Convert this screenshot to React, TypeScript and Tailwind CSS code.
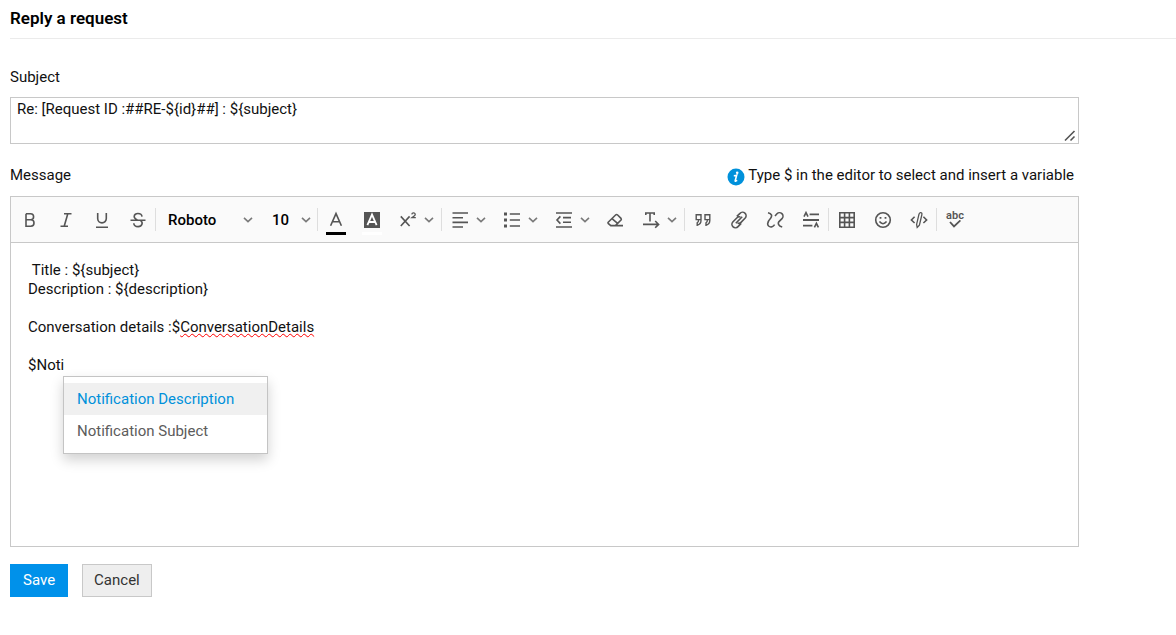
import React, { useState } from "react";

const stroke = {
  fill: "none",
  stroke: "currentColor",
  strokeWidth: 1.6,
} as const;

function Icon({ children }: { children: React.ReactNode }) {
  return (
    <svg viewBox="0 0 18 18" className="w-[18px] h-[18px] shrink-0" aria-hidden="true" {...stroke}>
      {children}
    </svg>
  );
}

function Chevron() {
  return (
    <svg viewBox="0 0 10 6" className="w-2.5 h-1.5 shrink-0 text-[#7a7a7a]" aria-hidden="true" {...stroke}>
      <path d="M1 0.8 L5 4.6 L9 0.8" />
    </svg>
  );
}

const icons = {
  bold: (
    <Icon>
      <path d="M5 2.8 H9.6 A3 3 0 0 1 9.6 8.8 H5 M9.8 8.8 A3.2 3.2 0 0 1 9.8 15.2 H5 V2.8" />
    </Icon>
  ),
  italic: (
    <Icon>
      <path d="M7 2.8 H14.5 M3.5 15.2 H11 M10.8 2.8 L7.2 15.2" />
    </Icon>
  ),
  underline: (
    <Icon>
      <path d="M4.7 2 V7.6 A4.3 4.3 0 0 0 13.3 7.6 V2 M3 16.2 H15" />
    </Icon>
  ),
  strike: (
    <Icon>
      <path d="M13 5.6 C12.6 1.6 5.2 1.4 5.2 5.6 C5.2 7.4 6.5 8.2 8.4 8.9 M1.5 9.3 H16.5 M11.6 9.6 C14.4 11.4 13.2 15.6 9.2 15.6 C6.4 15.6 4.9 14.2 4.8 12.2" />
    </Icon>
  ),
  color: (
    <Icon>
      <path d="M3.6 14.8 L9 2.6 L14.4 14.8 M5.4 10.8 H12.6" />
    </Icon>
  ),
  highlight: (
    <Icon>
      <rect x="1" y="1" width="16" height="16" fill="currentColor" stroke="none" />
      <path d="M4.4 14.2 L9 3.6 L13.6 14.2 M6 11 H12" stroke="#fff" strokeWidth="1.8" />
    </Icon>
  ),
  script: (
    <Icon>
      <path d="M1.8 5.4 L10.6 15 M10.6 5.4 L1.8 15" />
      <path d="M12.8 3.4 C13 1.4 16.4 1.4 16.2 3.6 C16.1 4.6 14.2 5.6 13 6.6 H16.8" strokeWidth="1.3" />
    </Icon>
  ),
  align: (
    <Icon>
      <path d="M1.5 2 H17 M1.5 6.7 H12 M1.5 11.4 H17 M1.5 16 H12" />
    </Icon>
  ),
  list: (
    <Icon>
      <path d="M6.8 3 H17 M6.8 9 H17 M6.8 15 H17" />
      <path d="M1 3 H4 M1 9 H4 M1 15 H4" strokeWidth="3" />
    </Icon>
  ),
  indent: (
    <Icon>
      <path d="M1 2 H17 M8 6.6 H16 M8 11.2 H16 M1 16 H17 M5.4 5.4 L2 9 L5.4 12.6" />
    </Icon>
  ),
  eraser: (
    <Icon>
      <path d="M1.2 11.2 L8.8 3.8 Q9.6 3.2 10.4 3.8 L14 7.4 Q14.6 8.2 14 9 L8.4 14.6 H3.8 L1.2 12.4 Q0.8 11.8 1.2 11.2 Z M5 7.6 L10.6 12.4 M7 14.6 H16" />
    </Icon>
  ),
  direction: (
    <Icon>
      <path d="M3.8 4 V2 H12.2 V4 M8 2 V10.6 M1 13.4 H16.4 M13.2 10 L16.6 13.4 L13.2 16.8" />
    </Icon>
  ),
  quote: (
    <Icon>
      <path d="M6.8 8.6 H2.2 V3.8 H7 V9.6 Q7 13.4 3.2 14.2 V11.8 Q4.6 11.4 4.6 8.8 M15.6 8.6 H11 V3.8 H15.8 V9.6 Q15.8 13.4 12 14.2 V11.8 Q13.4 11.4 13.4 8.8" strokeWidth="1.4" />
    </Icon>
  ),
  link: (
    <Icon>
      <path d="M6.8 5.4 L10 2.4 A3.4 3.4 0 0 1 15.2 7 L11 11.4 A3 3 0 0 1 7.6 12 M11.2 12.4 L8 15.6 A3.4 3.4 0 0 1 2.8 11 L7 6.8 A3 3 0 0 1 10.4 6 M5.8 12.2 L12.2 5.8" />
    </Icon>
  ),
  unlink: (
    <Icon>
      <path d="M2 1.8 C5.8 2.6 6.4 4.8 4.6 7.2 C1.4 10.6 0.8 13 2.6 15 C4.8 17 7.4 15.4 8.6 13.6 M9 5 L11 2.8 A3.4 3.4 0 0 1 16 7.6 L13 10.6 C11.6 12.4 12.4 15 16.2 16" />
    </Icon>
  ),
  spacing: (
    <Icon>
      <path d="M7.6 3.4 H17 M1 14.6 H10.4" />
      <path d="M1 9 H17" strokeWidth="2" />
      <path d="M2 5.6 L4 1.6 L6 5.6 M12.4 16.4 L14.4 12.4 L16.4 16.4" />
    </Icon>
  ),
  table: (
    <Icon>
      <path d="M1.8 1.8 H16.2 V16.2 H1.8 Z M6.6 1.8 V16.2 M11.4 1.8 V16.2 M1.8 6.6 H16.2 M1.8 11.4 H16.2" />
    </Icon>
  ),
  smiley: (
    <Icon>
      <circle cx="9" cy="9" r="7.3" />
      <path d="M5.4 10.6 Q9 14.8 12.6 10.6" />
      <path d="M5.6 6.8 H7.4 M10.6 6.8 H12.4" strokeWidth="1.8" />
    </Icon>
  ),
  code: (
    <Icon>
      <path d="M4.6 5.8 L1.4 9 L4.6 12 M13.4 5.8 L16.6 9 L13.4 12" />
      <path d="M10.4 1.6 Q12.4 1.4 11.8 4 L9.4 14.2 L7.2 16.4 L6.6 13.4 L9 3.2 Q9.4 1.8 10.4 1.6 Z" strokeWidth="1.3" />
    </Icon>
  ),
};

type IconName = keyof typeof icons;

function ToolButton({
  icon,
  label,
  menu,
  underline,
  className = "w-9",
}: {
  icon: IconName;
  label: string;
  menu?: boolean;
  underline?: string;
  className?: string;
}) {
  return (
    <button
      type="button"
      aria-label={label}
      className={`relative flex items-center h-9 shrink-0 text-[#555] ${
        menu ? "w-[52px] pl-[9px] gap-[7px]" : `justify-center ${className}`
      }`}
    >
      {icons[icon]}
      {menu && <Chevron />}
      {underline && <span className={`absolute left-2 right-2 bottom-[3px] h-[3px] ${underline}`} />}
    </button>
  );
}

function Separator() {
  return <div className="w-px -ml-px h-[23px] shrink-0 bg-[#dedede]" />;
}

function ToolSelect({ label, options, className }: { label: string; options: string[]; className: string }) {
  return (
    <div className={`relative flex items-center shrink-0 ${className}`}>
      <select
        aria-label={label}
        className="appearance-none w-full h-9 pl-3 bg-transparent text-[15px] font-medium text-black outline-none"
      >
        {options.map(option => (
          <option key={option}>{option}</option>
        ))}
      </select>
      <span className="absolute right-[7px] pointer-events-none">
        <Chevron />
      </span>
    </div>
  );
}

function Toolbar() {
  return (
    <div
      role="toolbar"
      aria-label="Formatting"
      className="flex items-center h-[46px] pl-px bg-[#fafafa] border-b border-[#c8c8c8] overflow-hidden"
    >
      <ToolButton icon="bold" label="Bold" />
      <ToolButton icon="italic" label="Italic" />
      <ToolButton icon="underline" label="Underline" />
      <ToolButton icon="strike" label="Strikethrough" />
      <Separator />
      <ToolSelect label="Font" options={["Roboto", "Arial", "Verdana"]} className="w-[104px]" />
      <ToolSelect label="Font size" options={["10", "12", "14"]} className="w-[58px]" />
      <Separator />
      <ToolButton icon="color" label="Text color" underline="bg-black" />
      <ToolButton icon="highlight" label="Background color" underline="bg-white" />
      <ToolButton icon="script" label="Superscript" menu />
      <Separator />
      <ToolButton icon="align" label="Align" menu />
      <ToolButton icon="list" label="List" menu />
      <ToolButton icon="indent" label="Indent" menu />
      <ToolButton icon="eraser" label="Clear formatting" className="w-[35px]" />
      <ToolButton icon="direction" label="Text direction" menu />
      <Separator />
      <ToolButton icon="quote" label="Quote" />
      <ToolButton icon="link" label="Insert link" />
      <ToolButton icon="unlink" label="Remove link" />
      <ToolButton icon="spacing" label="Line spacing" />
      <Separator />
      <ToolButton icon="table" label="Insert table" />
      <ToolButton icon="smiley" label="Insert emoji" />
      <ToolButton icon="code" label="Insert HTML" />
      <Separator />
      <button
        type="button"
        aria-label="Spell check"
        className="flex flex-col items-center w-9 shrink-0 text-[#555]"
      >
        <span className="text-[11px] leading-[8px] font-semibold">abc</span>
        <svg viewBox="0 0 12 8" className="w-3 h-2" aria-hidden="true" {...stroke} strokeWidth={1.8}>
          <path d="M1 2 L5 6.4 L11.4 0.4" />
        </svg>
      </button>
    </div>
  );
}

const variables = ["Notification Description", "Notification Subject"];

function VariableMenu() {
  const [active, setActive] = useState(0);

  return (
    <ul
      role="listbox"
      aria-label="Variables"
      contentEditable={false}
      className="absolute left-[35px] top-full w-[205px] mt-px py-1.5 bg-white border border-[#c4c4c4] shadow-[0_6px_12px_rgba(0,0,0,0.18)]"
    >
      {variables.map((name, i) => (
        <li
          key={name}
          role="option"
          aria-selected={i === active}
          onMouseEnter={() => setActive(i)}
          className={`h-8 px-[13px] leading-8 whitespace-nowrap cursor-pointer ${
            i === active ? "bg-[#f0f0f0] text-[#0091db]" : "text-[#5c5c5c]"
          }`}
        >
          {name}
        </li>
      ))}
    </ul>
  );
}

function MessageEditor() {
  return (
    <div className="border border-[#c8c8c8]">
      <Toolbar />
      <div
        role="textbox"
        aria-multiline="true"
        aria-labelledby="message-label"
        contentEditable
        suppressContentEditableWarning
        spellCheck={false}
        className="min-h-[303px] px-[17px] py-[18px] leading-[19px] outline-none"
      >
        <p>&nbsp;Title : {"${subject}"}</p>
        <p>Description : {"${description}"}</p>
        <br />
        <p>
          Conversation details :$
          <span className="underline decoration-wavy decoration-[#ff0000] decoration-1">ConversationDetails</span>
        </p>
        <br />
        <div className="relative w-fit">
          $Noti
          <VariableMenu />
        </div>
      </div>
    </div>
  );
}

export default function App() {
  return (
    <main className="pl-2.5 bg-white font-['Roboto',sans-serif] text-[15px] leading-5 text-[#111]">
      <h1 className="h-[39px] pt-2 border-b border-[#ebebeb] text-[17px] leading-5 font-semibold text-black">
        Reply a request
      </h1>

      <form className="pr-[97px] pt-7" onSubmit={e => e.preventDefault()}>
        <label htmlFor="subject" className="block">
          Subject
        </label>
        <div className="relative mt-2.5">
          <textarea
            id="subject"
            defaultValue={"Re: [Request ID :##RE-${id}##] : ${subject}"}
            className="block w-full h-[47px] px-1.5 py-0.5 leading-[19px] border border-[#c8c8c8] outline-none resize-none"
          />
          <svg
            viewBox="0 0 12 12"
            className="absolute right-[3px] bottom-[2px] size-3 text-[#555] pointer-events-none"
            aria-hidden="true"
            {...stroke}
          >
            <path d="M1 10.5 L10.5 1 M6.5 10.5 L10.5 6.5" />
          </svg>
        </div>

        <div className="flex items-center justify-between mt-[21px] mb-[11px] pr-[5px]">
          <span id="message-label">Message</span>
          <span className="flex items-center gap-[3px]">
            <svg viewBox="0 0 18 18" className="w-[18px] h-[18px] mt-[3px] -mb-px" aria-hidden="true">
              <circle cx="9" cy="9" r="8.5" fill="#0091db" />
              <circle cx="10.2" cy="4.8" r="1.3" fill="#fff" />
              <path
                d="M6.8 7.8 Q9.4 7.6 9.6 7.4 L8.2 12.8 Q8 13.8 10.2 12.4"
                fill="none"
                stroke="#fff"
                strokeWidth="1.6"
              />
            </svg>
            Type $ in the editor to select and insert a variable
          </span>
        </div>

        <MessageEditor />

        <div className="flex gap-3.5 mt-[17px]">
          <button type="submit" className="h-[33px] px-[13px] pb-0.5 bg-[#0091ea] text-white">
            Save
          </button>
          <button type="button" className="h-[33px] px-[11px] pb-0.5 bg-[#eee] border border-[#c8c8c8] text-[#333]">
            Cancel
          </button>
        </div>
      </form>
    </main>
  );
}
